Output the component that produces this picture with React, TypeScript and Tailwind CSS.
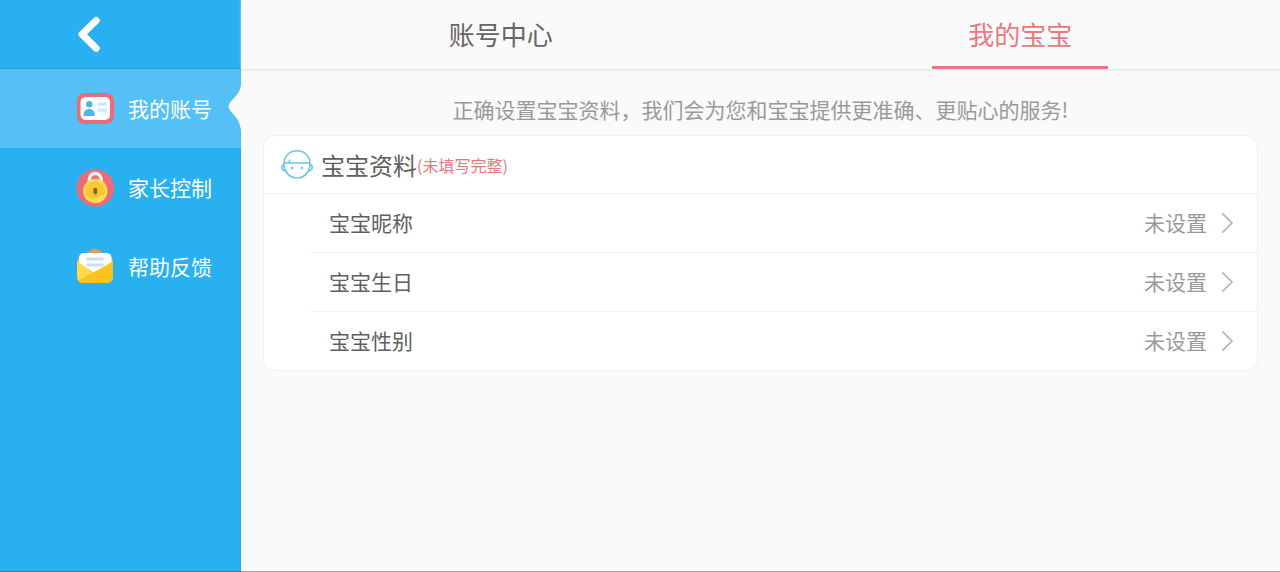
import React, { useState } from 'react';

interface NavItem {
  id: string;
  label: string;
  icon: React.ReactNode;
}

interface ProfileRow {
  label: string;
  value: string;
}

const AccountIcon = () => (
  <svg className="h-10 w-10" viewBox="0 0 40 40" fill="none" aria-hidden="true">
    <rect x="2" y="4" width="37" height="31" rx="8" fill="#ed6b75" />
    <rect x="5.5" y="8" width="29.5" height="23" rx="5" fill="#fff" />
    <circle cx="14.2" cy="15.2" r="3.2" fill="#4db8df" />
    <path d="M8.6 26c0-3.8 2.2-6 5.6-6s5.600 2.200 5.600 6c0 .6-.3 1-1 1H9.600c-.7 0-1-.4-1-1z" fill="#4db8df" />
    <rect x="22.5" y="13.5" width="9.5" height="3.2" rx="1" fill="#c9ecf7" />
    <rect x="22.5" y="19.5" width="9.5" height="3.2" rx="1" fill="#c9ecf7" />
  </svg>
);

const LockIcon = () => (
  <svg className="h-10 w-10" viewBox="0 0 40 40" fill="none" aria-hidden="true">
    <circle cx="20.3" cy="20" r="18.8" fill="#ed6b75" />
    <path d="M14.3 17v-5.500a6 6 0 0 1 12 0V17" stroke="#dff2fa" strokeWidth="3.4" />
    <circle cx="20.3" cy="23" r="12.2" fill="#ffd957" />
    <circle cx="20.3" cy="23" r="9.6" fill="#fac634" />
    <path d="M17 32a9.600 9.600 0 0 0 12.500-6z" fill="#ffdd63" />
    <rect x="18.4" y="19.8" width="3.8" height="6.6" rx="1.8" fill="#8a6420" />
  </svg>
);

const MailIcon = () => (
  <svg className="h-10 w-10" viewBox="0 0 40 40" fill="none" aria-hidden="true">
    <path d="M11 7l5.500-4.300c2-1.200 5-1.200 7 0L29 7z" fill="#f2925a" />
    <path d="M2 15C2 12 4 10 7 9h26c3 1 5 3 5 6v8H2z" fill="#f5b62c" />
    <path d="M4 11C4 8 6 6 9 6h22.500c3 0 5 2 5 5v7L20 27.500 4 18z" fill="#fff" />
    <rect x="11.5" y="10.5" width="17" height="3" rx="1" fill="#c5e0ee" />
    <rect x="11.500" y="16.5" width="17" height="3" rx="1" fill="#c5e0ee" />
    <path d="M2 14.500l18 11.500 18-11.500v15.500a6 6 0 0 1-6 6H8a6 6 0 0 1-6-6z" fill="#ffd84d" />
    <path d="M38 14.500v15.500a6 6 0 0 1-6 6H8c-2 0-3.500-.8-4.600-2.200z" fill="#fbc31d" />
  </svg>
);

const BabyIcon = () => (
  <svg className="h-8 w-8" viewBox="0 0 32 32" fill="none" stroke="#6cc4e2" strokeWidth="1.6" aria-hidden="true">
    <path d="M3 14C3.200 7 9 1.800 16 1.800S28.800 7 29 14z" />
    <path d="M3 14v2.500C3.800 23.500 9 29 16 29s12.200-5.500 13-12.500V14" />
    <path d="M3 15.500c-1.500.2-2.200 1.400-2.200 3s1.300 3.300 3.200 3.100M29 15.500c1.500.2 2.200 1.400 2.200 3s-1.300 3.300-3.200 3.100" />
    <path d="M8.500 10.500V14" />
    <circle cx="11" cy="19" r="1.2" fill="#6cc4e2" stroke="none" />
    <circle cx="21" cy="19" r="1.2" fill="#6cc4e2" stroke="none" />
  </svg>
);

const navItems: NavItem[] = [
  { id: 'account', label: '我的账号', icon: <AccountIcon /> },
  { id: 'parent', label: '家长控制', icon: <LockIcon /> },
  { id: 'help', label: '帮助反馈', icon: <MailIcon /> }
];

const tabs = ['账号中心', '我的宝宝'];

const rows: ProfileRow[] = [
  { label: '宝宝昵称', value: '未设置' },
  { label: '宝宝生日', value: '未设置' },
  { label: '宝宝性别', value: '未设置' }
];

const Sidebar: React.FC = () => {
  const [active, setActive] = useState('account');

  return (
    <aside className="w-[241px] shrink-0 bg-[#29b0f1] border-b border-[#1b86bb]">
      <div className="h-[69px] pl-[75px] flex items-center border-b border-[#1f9fdf]">
        <button type="button" aria-label="返回" className="cursor-pointer">
          <svg className="h-10 w-7" viewBox="0 0 28 40" fill="none" aria-hidden="true">
            <path d="M21.200 6.500L7 20.300l14.200 14" stroke="#fff" strokeWidth="7" strokeLinecap="round" strokeLinejoin="round" />
          </svg>
        </button>
      </div>
      <nav>
        {navItems.map((item) => (
          <button
            key={item.id}
            type="button"
            onClick={() => setActive(item.id)}
            className={`relative w-full h-[79px] pl-[75px] flex items-center gap-[13px] text-[21px] text-white cursor-pointer ${
              active === item.id ? 'bg-[#54c0f6]' : ''
            }`}
          >
            {item.icon}
            <span>{item.label}</span>
            {/* Notch pointing at the selected entry */}
            {active === item.id && (
              <svg className="absolute right-0 top-4 h-12 w-[13px]" viewBox="0 0 13 48" aria-hidden="true">
                <path d="M13 0C12 11 1 15 .5 21.500C1 28 12 31 13 46z" fill="#fafafa" />
              </svg>
            )}
          </button>
        ))}
      </nav>
    </aside>
  );
};

const App: React.FC = () => {
  const [activeTab, setActiveTab] = useState(tabs[1]);

  return (
    <div className="flex min-h-screen bg-[#fafafa] font-['Noto_Sans_CJK_SC',sans-serif]">
      <Sidebar />
      <main className="flex-1 border-b border-[#a5a9ac]">
        <div role="tablist" className="flex h-[69px] shadow-[0_1px_2px_#dddddd]">
          {tabs.map((tab) => (
            <button
              key={tab}
              type="button"
              role="tab"
              aria-selected={activeTab === tab}
              onClick={() => setActiveTab(tab)}
              className={`flex-1 flex flex-col items-center text-[26px] cursor-pointer ${
                activeTab === tab ? 'text-[#e9797f]' : 'text-[#666]'
              }`}
            >
              <span className="flex-1 flex items-center">{tab}</span>
              <span className={`h-[3px] w-[176px] ${activeTab === tab ? 'bg-[#e9797f]' : ''}`} />
            </button>
          ))}
        </div>

        <div className="px-[22px] pt-6">
          <p className="text-center text-[21px] leading-8 text-[#999]">
            正确设置宝宝资料，我们会为您和宝宝提供更准确、更贴心的服务!
          </p>

          <section className="mt-[10px] rounded-xl border border-[#f0f0f0] bg-white">
            <h2 className="flex h-[58px] items-center border-b border-[#f0f0f0] pl-[17px]">
              <BabyIcon />
              <span className="ml-2 text-2xl leading-8 text-[#5f5f5f]">宝宝资料</span>
              <span className="text-base text-[#e9797f]">(未填写完整)</span>
            </h2>
            <ul className="pl-[46px]">
              {rows.map((row) => (
                <li key={row.label} className="border-b border-[#f0f0f0] last:border-b-0">
                  <button
                    type="button"
                    className="flex h-[58px] w-full items-center pl-[19px] pr-6 text-[21px] cursor-pointer"
                  >
                    <span className="text-[#5f5f5f]">{row.label}</span>
                    <span className="ml-auto text-[#999]">{row.value}</span>
                    <svg className="ml-[14px] h-6 w-3" viewBox="0 0 12 24" fill="none" aria-hidden="true">
                      <path d="M1.500 2.500L11 12 1.500 21.500" stroke="#bbb" strokeWidth="1.800" />
                    </svg>
                  </button>
                </li>
              ))}
            </ul>
          </section>
        </div>
      </main>
    </div>
  );
};

export default App;
